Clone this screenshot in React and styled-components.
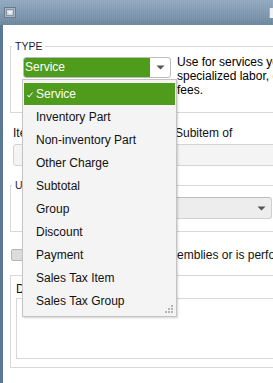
import styled, { createGlobalStyle } from 'styled-components';

const itemTypes = [
  'Service',
  'Inventory Part',
  'Non-inventory Part',
  'Other Charge',
  'Subtotal',
  'Group',
  'Discount',
  'Payment',
  'Sales Tax Item',
  'Sales Tax Group',
];

const GlobalStyle = createGlobalStyle`
  html, body {
    margin: 0;
    padding: 0;
    background: #ffffff;
  }
  body {
    font-family: "Liberation Sans", Arial, sans-serif;
    font-size: 12px;
    color: #111;
  }
`;

const Arrow = () => (
  <svg width="9" height="5" viewBox="0 0 9 5">
    <path d="M0.5 0.5 H8.5 L4.5 4.5 Z" fill="#555" />
  </svg>
);

const App = () => {
  return (
    <Window>
      <GlobalStyle />
      <TitleBar>
        <WinIcon>
          <svg width="12" height="11" viewBox="0 0 12 11">
            <rect x="0.5" y="0.5" width="11" height="10" fill="#a9b6c3" stroke="#6b7b8b" />
            <rect x="2.5" y="2.5" width="7" height="6" fill="#cdd6de" stroke="#8797a6" />
            <path d="M3.5 4.5 H8.5 L6 7 Z" fill="#ffffff" />
          </svg>
        </WinIcon>
        <EdgeButton />
      </TitleBar>

      <Body>
        <Group>
          <Legend>TYPE</Legend>
          <TypeRow>
            <SelectBox>
              <SelectValue>Service</SelectValue>
              <SelectArrow><Arrow /></SelectArrow>
            </SelectBox>
            <Hint>
              Use for services you charge for or purchase, like specialized labor, consulting hours, or professional fees.
            </Hint>
          </TypeRow>
        </Group>

        <LabelRow>
          <FieldLabel width={162}>Item Name/Number</FieldLabel>
          <FieldLabel>Subitem of</FieldLabel>
        </LabelRow>
        <InputRow>
          <TextInput width={157} />
          <TextInput width={200} />
        </InputRow>

        <Group top={12}>
          <Legend>Unit of Measure</Legend>
          <UnitSelect>
            <Arrow />
          </UnitSelect>
        </Group>

        <CheckRow>
          <CheckBox />
          <CheckLabel>This service is used in assemblies or is performed by a subcontractor or partner</CheckLabel>
        </CheckRow>

        <DescBox>
          <FieldLabel>Description</FieldLabel>
          <TextArea />
        </DescBox>
      </Body>

      <Menu>
        {itemTypes.map((name, i) => (
          <MenuItem key={name} selected={i === 0}>
            {i === 0 && (
              <Check>
                <svg width="6" height="6" viewBox="0 0 6 6">
                  <path d="M0.5 3 L2 5 L5.5 0.5" fill="none" stroke="#fff" strokeWidth="1" />
                </svg>
              </Check>
            )}
            {name}
          </MenuItem>
        ))}
        <Grip>
          <svg width="9" height="9" viewBox="0 0 9 9">
            <g fill="#b4b4b4">
              <rect x="6" y="0" width="2" height="2" />
              <rect x="3" y="3" width="2" height="2" />
              <rect x="6" y="3" width="2" height="2" />
              <rect x="0" y="6" width="2" height="2" />
              <rect x="3" y="6" width="2" height="2" />
              <rect x="6" y="6" width="2" height="2" />
            </g>
          </svg>
        </Grip>
      </Menu>
    </Window>
  );
};

const Window = styled.div`
  position: relative;
  width: 273px;
  height: 383px;
  overflow: hidden;
  background: #ffffff;
`;

const TitleBar = styled.div`
  height: 25px;
  display: flex;
  align-items: center;
  justify-content: space-between;
  padding-left: 4px;
  box-sizing: border-box;
  background:
    repeating-linear-gradient(90deg, rgba(255,255,255,0.05) 0 1px, transparent 1px 2px),
    linear-gradient(#91a9c0, #7e97b0 55%, #6a859f);
`;

const WinIcon = styled.div`
  display: flex;
  margin-top: -1px;
`;

const EdgeButton = styled.div`
  width: 3px;
  height: 10px;
  background: #eef3f6;
  border-left: 1px solid #9fb2c4;
`;

const Body = styled.div`
  display: flex;
  flex-direction: column;
  align-items: flex-start;
  width: 500px;
  height: 358px;
  box-sizing: border-box;
  border-left: 3px solid #5b7993;
  padding: 14px 0 0 7px;
`;

const Group = styled.fieldset`
  margin: ${p => p.top || 0}px 0 0 0;
  padding: 4px 0 0 0;
  width: 480px;
  box-sizing: border-box;
  border: 1px solid #d8d8d8;
  min-inline-size: 0;
`;

const Legend = styled.legend`
  margin-left: 1px;
  padding: 0 3px;
  font-size: 10.5px;
  line-height: 14px;
  color: #1b1b3a;
`;

const TypeRow = styled.div`
  display: flex;
  align-items: flex-start;
  gap: 6px;
  margin-left: 12px;
  padding-bottom: 15px;
`;

const SelectBox = styled.div`
  display: flex;
  flex: 0 0 148px;
  height: 21px;
  box-sizing: border-box;
  border: 1px solid #bcbcbc;
  border-radius: 3px;
  background: #ffffff;
  overflow: hidden;
`;

const SelectValue = styled.div`
  flex: 0 0 125px;
  background: #4f9b1b;
  color: #ffffff;
  font-size: 12px;
  line-height: 19px;
  padding-left: 1px;
`;

const SelectArrow = styled.div`
  flex: 1;
  display: flex;
  align-items: center;
  justify-content: center;
`;

const Hint = styled.div`
  width: 280px;
  margin-top: -2px;
  font-size: 12px;
  line-height: 14px;
  color: #000;
`;

const LabelRow = styled.div`
  display: flex;
  margin: 13px 0 0 3px;
`;

const FieldLabel = styled.div`
  width: ${p => (p.width ? `${p.width}px` : 'auto')};
  font-size: 12px;
  line-height: 14px;
  color: #111;
  white-space: nowrap;
`;

const InputRow = styled.div`
  display: flex;
  gap: 5px;
  margin: 4px 0 0 3px;
`;

const TextInput = styled.div`
  width: ${p => p.width}px;
  height: 22px;
  box-sizing: border-box;
  border: 1px solid #d3d3d3;
  border-radius: 3px;
  background: #f4f4f4;
`;

const UnitSelect = styled.div`
  display: flex;
  align-items: center;
  justify-content: flex-end;
  width: 245px;
  height: 22px;
  box-sizing: border-box;
  margin: 1px 0 12px 16px;
  padding-right: 5px;
  border: 1px solid #d0d0d0;
  border-top-color: #bdbdbd;
  border-radius: 3px;
  background: #ededed;
`;

const CheckRow = styled.div`
  display: flex;
  align-items: center;
  margin: 16px 0 0 1px;
`;

const CheckBox = styled.div`
  width: 12px;
  height: 12px;
  box-sizing: border-box;
  border: 1px solid #b5b5b5;
  border-radius: 2px;
  background: #dcdcdc;
`;

const CheckLabel = styled.div`
  margin-left: 14px;
  font-size: 12px;
  line-height: 14px;
  white-space: nowrap;
  color: #111;
`;

const DescBox = styled.div`
  display: flex;
  flex-direction: column;
  gap: 2px;
  width: 480px;
  box-sizing: border-box;
  margin-top: 13px;
  padding: 6px 0 8px 5px;
  border: 1px solid #d8d8d8;
`;

const TextArea = styled.div`
  width: 460px;
  height: 61px;
  box-sizing: border-box;
  border: 1px solid #d8d8d8;
`;

const Menu = styled.div`
  position: absolute;
  left: 22px;
  top: 79px;
  width: 155px;
  height: 238px;
  box-sizing: border-box;
  padding: 3px 1px 0 1px;
  border: 1px solid #c4c4c4;
  background: #f4f4f4;
  box-shadow: 1px 1px 2px rgba(0, 0, 0, 0.18);
`;

const MenuItem = styled.div`
  position: relative;
  height: 22px;
  margin-bottom: 1px;
  padding-left: 12px;
  font-size: 12px;
  line-height: 22px;
  white-space: nowrap;
  color: ${p => (p.selected ? '#ffffff' : '#111')};
  background: ${p => (p.selected ? '#4f9b1b' : 'transparent')};
`;

const Check = styled.span`
  position: absolute;
  left: 3px;
  top: 9px;
  display: flex;
`;

const Grip = styled.div`
  position: absolute;
  right: 2px;
  bottom: 2px;
  display: flex;
`;

export default App;
